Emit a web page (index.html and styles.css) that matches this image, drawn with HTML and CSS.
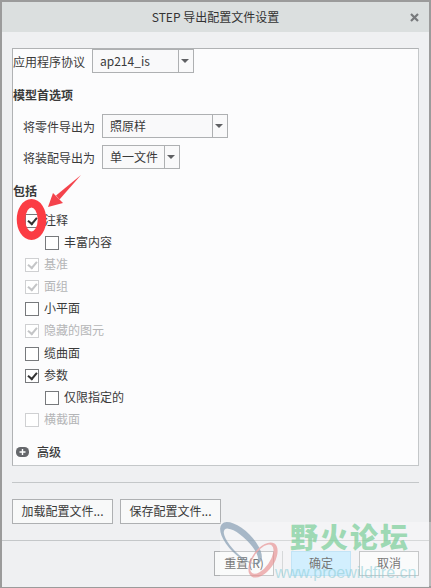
FILE: index.html
```html
<!DOCTYPE html>
<html lang="zh-CN">
<head>
  <meta charset="UTF-8" />
  <title>STEP 导出配置文件设置</title>
  <link rel="stylesheet" href="styles.css">
</head>
<body>
  <div class="dialog">
    <div class="titlebar">
      <span class="title">STEP 导出配置文件设置</span>
      <svg class="close" width="9" height="9" viewBox="0 0 9 9"><path d="M1 1L8 8M8 1L1 8" stroke="#77797c" stroke-width="2.2"/></svg>
    </div>

    <div class="content">
      <div class="panel">
        <div class="field first-field">
          <label>应用程序协议</label>
          <div class="combo combo-protocol"><span class="combo-value">ap214_is</span><span class="combo-arrow"></span></div>
        </div>

        <div class="heading model-heading">模型首选项</div>
        <div class="field indented part-field">
          <label>将零件导出为</label>
          <div class="combo combo-part"><span class="combo-value">照原样</span><span class="combo-arrow"></span></div>
        </div>
        <div class="field indented asm-field">
          <label>将装配导出为</label>
          <div class="combo combo-asm"><span class="combo-value">单一文件</span><span class="combo-arrow"></span></div>
        </div>

        <div class="heading include-heading">包括</div>
        <div class="checks">
          <div class="check on">注释</div>
          <div class="check sub">丰富内容</div>
          <div class="check on disabled">基准</div>
          <div class="check on disabled">面组</div>
          <div class="check">小平面</div>
          <div class="check on disabled">隐藏的图元</div>
          <div class="check">缆曲面</div>
          <div class="check on">参数</div>
          <div class="check sub">仅限指定的</div>
          <div class="check disabled">横截面</div>
        </div>

        <div class="advanced">
          <svg width="13" height="10" viewBox="0 0 13 10"><rect width="13" height="10" rx="4.5" fill="#66686c"/><path d="M3.5 5H9.5M6.5 2V8" stroke="#fff" stroke-width="1.4"/></svg>
          <span>高级</span>
        </div>
      </div>

      <div class="config-row">
        <button class="btn btn-config">加载配置文件...</button>
        <button class="btn btn-config">保存配置文件...</button>
      </div>
    </div>

    <div class="footer">
      <button class="btn btn-foot">重置(R)</button>
      <span class="foot-divider"></span>
      <button class="btn btn-foot btn-primary">确定</button>
      <button class="btn btn-foot">取消</button>
    </div>

    <!-- red annotation drawn on the screenshot, coordinates are page pixels -->
    <svg class="annotation" width="431" height="588" viewBox="0 0 431 588">
      <ellipse cx="31.5" cy="219.5" rx="10.5" ry="16.2" fill="none" stroke="#fb3c44" stroke-width="8.5"/>
      <path d="M81 175L59.5 199.5L56 195.5Z" fill="#f4434c"/>
      <path d="M48 207L53 193L63 203Z" fill="#f4434c"/>
    </svg>

    <!-- forum watermark -->
    <div class="watermark">
      <svg class="rings" width="64" height="62" viewBox="0 0 64 62">
        <path transform="rotate(-45 18 21)" fill="#7f98ae" fill-rule="evenodd" d="M6 21a12 27 0 1 0 24 0a12 27 0 1 0 -24 0ZM8 23a8 23 0 1 0 16 0a8 23 0 1 0 -16 0Z"/>
        <path transform="rotate(35 40 38)" fill="#e88f90" fill-rule="evenodd" d="M29 38a11 20 0 1 0 22 0a11 20 0 1 0 -22 0ZM30.5 38a8 17 0 1 0 16 0a8 17 0 1 0 -16 0Z"/>
      </svg>
      <div class="wm-name">野火论坛</div>
      <div class="wm-url">www.proewildfire.cn</div>
    </div>
  </div>
</body>
</html>
```

FILE: styles.css
```css
* {
  box-sizing: border-box;
}

body {
  margin: 0;
  width: 431px;
  height: 588px;
  overflow: hidden;
  font-family: "Noto Sans CJK SC", "Liberation Sans", sans-serif;
  font-size: 12px;
  color: #3a3a3a;
}

.dialog {
  position: relative;
  width: 431px;
  height: 588px;
  background: #eff0f2;
  border: 2px solid #9b9b9b;
  border-bottom-width: 1px;
  display: flex;
  flex-direction: column;
}

.titlebar {
  position: relative;
  height: 30px;
  flex: none;
  background: #dbdfdf;
  display: flex;
  align-items: center;
  justify-content: center;
  color: #333;
}

.title {
  margin-top: -2px;
}

.close {
  position: absolute;
  right: 10px;
  top: 11px;
}

.content {
  flex: 1;
  padding: 16px 10px 0;
  border-bottom: 1px solid #c4c7c9;
}

.panel {
  height: 418px;
  background: #fcfcfd;
  border: 1px solid #b0b2b4;
  border-bottom: 1px solid #c4c7c9;
  border-right: 1px solid #c4c7c9;
}

.field {
  display: flex;
  align-items: center;
  height: 24px;
}

.field label {
  width: 79px;
}

.indented {
  padding-left: 10px;
}

.part-field {
  margin-top: 10px;
}

.asm-field {
  margin-top: 7px;
}

.combo {
  display: flex;
  height: 24px;
  background: #f9f9fa;
  border: 1px solid #aeb0b2;
}

.combo-protocol {
  width: 102px;
}

.combo-part {
  width: 126px;
}

.combo-asm {
  width: 78px;
}

.combo-value {
  flex: 1;
  padding-left: 7px;
  line-height: 21px;
}

.combo-arrow {
  position: relative;
  width: 15px;
  border-left: 1px solid #aeb0b2;
}

.combo-arrow::after {
  content: "";
  position: absolute;
  left: 2px;
  top: 9px;
  border-left: 4px solid transparent;
  border-right: 4px solid transparent;
  border-top: 4px solid #5f6063;
}

.heading {
  font-weight: 700;
  height: 18px;
  line-height: 18px;
}

.model-heading {
  margin-top: 13px;
}

.include-heading {
  margin-top: 13px;
}

.checks {
  margin-top: 9px;
}

.check {
  position: relative;
  height: 22.1px;
  line-height: 21px;
  padding-left: 31px;
}

.check::before {
  content: "";
  position: absolute;
  left: 12px;
  top: 5px;
  width: 12px;
  height: 12px;
  background: #fff;
  border: 1px solid #77797c;
}

.check.on::after {
  content: "";
  position: absolute;
  left: 14.5px;
  top: 8px;
  width: 7px;
  height: 4px;
  border-left: 2px solid #333;
  border-bottom: 2px solid #333;
  transform: rotate(-50deg);
}

.check.sub {
  padding-left: 51px;
}

.check.sub::before {
  left: 32px;
}

.check.disabled {
  color: #b4b5b7;
}

.check.disabled::before {
  border-color: #cfd0d2;
}

.check.disabled::after {
  border-color: #c4c5c7;
}

.advanced {
  display: flex;
  align-items: center;
  gap: 8px;
  margin-top: 12px;
  padding-left: 3px;
  height: 20px;
  font-weight: 500;
}

.config-row {
  margin-top: 16px;
  padding-top: 16px;
  border-top: 1px solid #c4c7c9;
  display: flex;
  gap: 7px;
}

.btn {
  font-family: inherit;
  font-size: 12px;
  color: #3a3a3a;
  height: 25px;
  padding: 0 0 2px;
  background: #f8f9f9;
  border: 1px solid #aeb0b2;
}

.btn-config {
  width: 101px;
}

.footer {
  height: 46px;
  flex: none;
  display: flex;
  align-items: flex-start;
  padding: 10px 0 0 212px;
}

.btn-foot {
  width: 60px;
}

.foot-divider {
  width: 1px;
  height: 25px;
  margin: 0 8px;
  background: #c4c7c9;
}

.btn-primary {
  background: #bfe8fe;
  border-color: #a9d8f2;
  margin-right: 8px;
}

.annotation {
  position: absolute;
  left: -2px;
  top: -2px;
  pointer-events: none;
}

.watermark {
  position: absolute;
  left: 218px;
  top: 520px;
  width: 211px;
  height: 64px;
  background: rgba(255, 255, 255, 0.3);
}

.rings {
  position: absolute;
  left: 3px;
  top: 0;
  overflow: visible;
  opacity: 0.65;
}

.wm-name {
  position: absolute;
  left: 70px;
  top: -6px;
  font-size: 28px;
  font-weight: 900;
  line-height: 40px;
  letter-spacing: 2px;
  color: rgba(120, 205, 150, 0.7);
  white-space: nowrap;
}

.wm-url {
  position: absolute;
  left: 55px;
  top: 42px;
  font-family: "Liberation Sans", sans-serif;
  font-size: 16px;
  line-height: 18px;
  color: rgba(140, 205, 215, 0.6);
  white-space: nowrap;
}
```
